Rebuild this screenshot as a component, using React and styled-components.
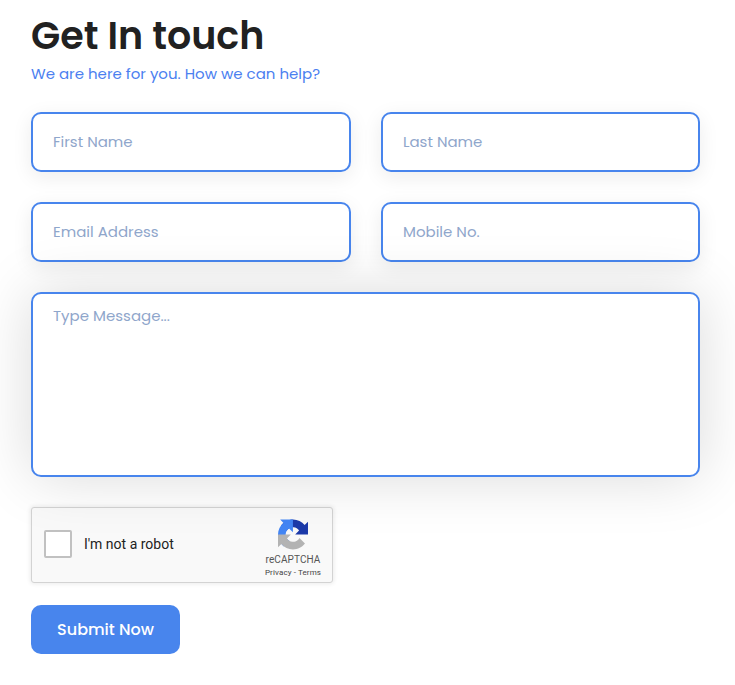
import React from "react";
import styled, { createGlobalStyle, css } from "styled-components";

const GlobalStyle = createGlobalStyle`
  *, *::before, *::after { box-sizing: border-box; }
  body {
    margin: 0;
    background: #fff;
    font-family: Poppins, Inter, sans-serif;
    overflow: hidden;
  }
`;

const Page = styled.main`
  width: 735px;
  height: 685px;
  padding: 12px 35px 0 31px;
  overflow: hidden;
`;

const Title = styled.h1`
  margin: 0;
  height: 48px;
  line-height: 48px;
  font-size: 38px;
  font-weight: 600;
  color: #212121;
  white-space: nowrap;
`;

const Subtitle = styled.p`
  margin: 2px 0 0;
  height: 24px;
  line-height: 24px;
  font-size: 15px;
  color: #4b80f0;
  white-space: nowrap;
`;

const Form = styled.form`
  display: flex;
  flex-direction: column;
  align-items: flex-start;
  margin-top: 26px;
`;

const FieldGrid = styled.div`
  display: grid;
  grid-template-columns: 320px 319px;
  gap: 30px;
`;

const fieldStyle = css`
  display: block;
  width: 100%;
  margin: 0;
  border: 2px solid #4885ed;
  border-radius: 10px;
  background: #fff;
  color: #212121;
  font-family: inherit;
  font-size: 15px;
  outline: none;

  &::placeholder {
    color: #8fa6cb;
    opacity: 1;
  }
`;

const Input = styled.input`
  ${fieldStyle}
  height: 60px;
  padding: 0 20px 2px;
  box-shadow: 0 5px 20px rgba(20, 30, 30, 0.08);
`;

const Message = styled.textarea`
  ${fieldStyle}
  position: relative;
  z-index: 1;
  width: 669px;
  height: 185px;
  margin-top: 30px;
  padding: 10px 20px;
  line-height: 24px;
  resize: none;
  box-shadow: 0 0 60px rgba(0, 0, 0, 0.15);
`;

const Captcha = styled.div`
  display: flex;
  align-items: flex-start;
  justify-content: space-between;
  width: 302px;
  height: 76px;
  margin-top: 30px;
  padding: 0 10px 0 12px;
  border: 1px solid #d3d3d3;
  border-radius: 3px;
  background: #f9f9f9;
  box-shadow: 0 0 4px 1px rgba(0, 0, 0, 0.08);
  font-family: Roboto, sans-serif;
`;

const CheckLabel = styled.label`
  display: flex;
  align-items: center;
  gap: 12px;
  margin-top: 22px;
  font-size: 14px;
  line-height: 17px;
  color: #222;
`;

const CheckBox = styled.input`
  appearance: none;
  width: 28px;
  height: 28px;
  margin: 0;
  border: 2px solid #c1c1c1;
  border-radius: 2px;
  background: #fff;
`;

const Brand = styled.div`
  display: flex;
  flex-direction: column;
  align-items: center;
  width: 58px;
  padding-top: 11px;
  color: #555;
`;

const BrandName = styled.div`
  margin-top: 4px;
  font-size: 10px;
  line-height: 12px;
  letter-spacing: 0.1px;
  white-space: nowrap;
`;

const BrandLinks = styled.div`
  margin-top: 2px;
  font-size: 8px;
  line-height: 10px;
  letter-spacing: 0.12px;
  color: #444;
  white-space: nowrap;
`;

const Submit = styled.button`
  width: 149px;
  height: 49px;
  margin-top: 22px;
  padding: 0;
  border: 0;
  border-radius: 10px;
  background: #4885ed;
  color: #fff;
  font-family: inherit;
  font-size: 16px;
  font-weight: 500;
`;

function RecaptchaMark() {
  return (
    <svg width="30" height="31" viewBox="0 0 64 64" aria-hidden="true">
      <path
        fill="#1c3aa9"
        d="M64 31.955a34 34 0 0 0-.02-1.37V4.687l-7.16 7.16C50.967 4.674 42.033.093 32.03.093c-10.41 0-19.66 4.965-25.5 12.65l11.736 11.86a15.55 15.55 0 0 1 4.754-5.334c2.05-1.6 4.952-2.906 8.968-2.906.485 0 .86.057 1.135.163 4.976.393 9.288 3.14 11.828 7.124l-8.307 8.307L64 31.953"
      />
      <path
        fill="#4285f4"
        d="M31.862.094a34 34 0 0 0-1.37.028H4.594l7.16 7.16C4.58 13.14 0 22.075 0 32.077c0 10.41 4.965 19.66 12.65 25.5L24.51 45.84a15.55 15.55 0 0 1-5.334-4.754c-1.6-2.05-2.906-4.952-2.906-8.968 0-.485.057-.86.163-1.135.393-4.976 3.14-9.288 7.124-11.828l8.307 8.307.001-27.37"
      />
      <path
        fill="#b3b3b3"
        d="M.001 32.045a34 34 0 0 0 .028 1.37v25.898l7.16-7.16c5.86 7.174 14.792 11.754 24.794 11.754 10.41 0 19.66-4.965 25.5-12.65L45.747 39.4a15.55 15.55 0 0 1-4.754 5.334c-2.05 1.6-4.952 2.906-8.968 2.906-.485 0-.86-.057-1.135-.163-4.976-.393-9.288-3.14-11.828-7.124l8.307-8.307-27.37.001"
      />
    </svg>
  );
}

export default function App() {
  return (
    <>
      <GlobalStyle />
      <Page>
        <Title>Get In touch</Title>
        <Subtitle>We are here for you. How we can help?</Subtitle>
        <Form onSubmit={(e) => e.preventDefault()}>
          <FieldGrid>
            <Input placeholder="First Name" />
            <Input placeholder="Last Name" />
            <Input placeholder="Email Address" />
            <Input placeholder="Mobile No." />
          </FieldGrid>
          <Message placeholder="Type Message..." />
          <Captcha>
            <CheckLabel>
              <CheckBox type="checkbox" />
              I'm not a robot
            </CheckLabel>
            <Brand>
              <RecaptchaMark />
              <BrandName>reCAPTCHA</BrandName>
              <BrandLinks>Privacy - Terms</BrandLinks>
            </Brand>
          </Captcha>
          <Submit type="submit">Submit Now</Submit>
        </Form>
      </Page>
    </>
  );
}
